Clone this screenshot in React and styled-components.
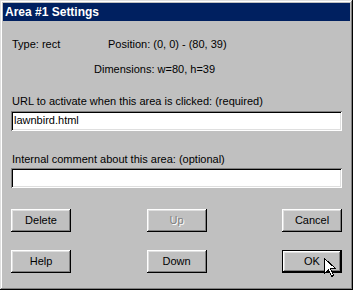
import React from "react";
import styled, { createGlobalStyle } from "styled-components";

const Global = createGlobalStyle`
  body {
    margin: 0;
    background: #c0c0c0;
  }
`;

const Window = styled.div`
  position: relative;
  width: 353px;
  height: 290px;
  box-sizing: border-box;
  padding: 3px;
  background: #c0c0c0;
  box-shadow: inset -1px -1px #000, inset 1px 1px #dfdfdf,
    inset -2px -2px #808080, inset 2px 2px #fff;
  font-family: "Liberation Sans", Arial, sans-serif;
  font-size: 11px;
  color: #000;
  display: flex;
  flex-direction: column;
`;

const TitleBar = styled.div`
  height: 18px;
  background: #002060;
  color: #fff;
  font-weight: bold;
  font-size: 12px;
  padding-left: 2px;
  display: flex;
  align-items: center;
`;

const Body = styled.div`
  padding: 17px 8px 0 8px;
  display: flex;
  flex-direction: column;
`;

const InfoRow = styled.div`
  display: flex;
  line-height: 13px;
  padding-left: ${(p) => p.$indent || 1}px;
  margin-bottom: ${(p) => p.$after || 0}px;
`;

const InfoLabel = styled.span`
  width: ${(p) => p.$width}px;
`;

const Label = styled.div`
  line-height: 13px;
  padding-left: 1px;
  margin-bottom: ${(p) => p.$gap}px;
`;

const Field = styled.div`
  height: 20px;
  box-sizing: border-box;
  background: #fff;
  padding: 3px 2px 0 3px;
  line-height: 13px;
  box-shadow: inset 1px 1px #808080, inset -1px -1px #fff,
    inset 2px 2px #000, inset -2px -2px #dfdfdf;
  margin-bottom: ${(p) => p.$after}px;
`;

const ButtonGrid = styled.div`
  display: grid;
  grid-template-columns: repeat(3, 60px);
  justify-content: space-between;
  row-gap: 18px;
`;

const Button = styled.div`
  height: 23px;
  box-sizing: border-box;
  display: flex;
  align-items: center;
  justify-content: center;
  background: #c0c0c0;
  color: ${(p) => (p.$disabled ? "#808080" : "#000")};
  text-shadow: ${(p) => (p.$disabled ? "1px 1px #fff" : "none")};
  box-shadow: ${(p) =>
    p.$default
      ? "inset 0 0 0 1px #000, inset -2px -2px #000, inset 2px 2px #fff, inset -3px -3px #808080, inset 3px 3px #dfdfdf"
      : "inset -1px -1px #000, inset 1px 1px #fff, inset -2px -2px #808080, inset 2px 2px #dfdfdf"};
  padding-bottom: 1px;
`;

const Cursor = styled.svg`
  position: absolute;
  left: 324px;
  top: 258px;
`;

export default function App() {
  return (
    <>
      <Global />
      <Window>
        <TitleBar>Area #1 Settings</TitleBar>
        <Body>
          <InfoRow $after={12}>
            <InfoLabel $width={96}>Type: rect</InfoLabel>
            <span>Position: (0, 0) - (80, 39)</span>
          </InfoRow>
          <InfoRow $indent={83} $after={19}>
            Dimensions: w=80, h=39
          </InfoRow>
          <Label $gap={3}>URL to activate when this area is clicked: (required)</Label>
          <Field $after={22}>lawnbird.html</Field>
          <Label $gap={2}>Internal comment about this area: (optional)</Label>
          <Field $after={21} />
          <ButtonGrid>
            <Button>Delete</Button>
            <Button $disabled>Up</Button>
            <Button>Cancel</Button>
            <Button>Help</Button>
            <Button>Down</Button>
            <Button $default>OK</Button>
          </ButtonGrid>
        </Body>
        <Cursor width="13" height="20" viewBox="0 0 13 20">
          <path
            d="M0.5 0.5 L0.5 15.5 L4.5 11.5 L7.5 18.5 L9.5 17.5 L6.5 10.5 L11.5 10.5 Z"
            fill="#fff"
            stroke="#000"
            strokeWidth="1"
            shapeRendering="crispEdges"
          />
        </Cursor>
      </Window>
    </>
  );
}
